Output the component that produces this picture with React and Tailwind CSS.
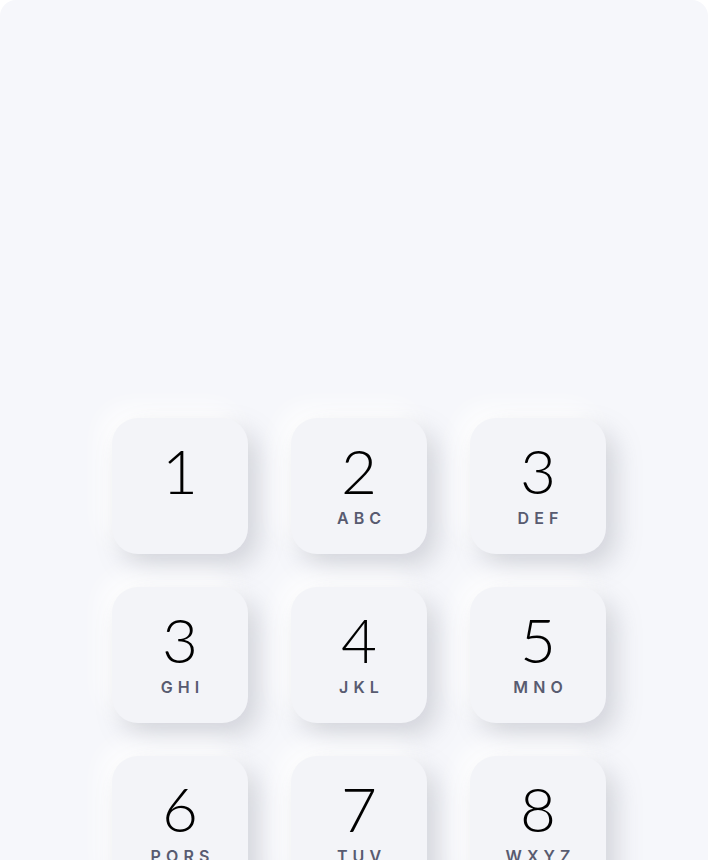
const keys = [
  { digit: '1', letters: '' },
  { digit: '2', letters: 'ABC' },
  { digit: '3', letters: 'DEF' },
  { digit: '3', letters: 'GHI' },
  { digit: '4', letters: 'JKL' },
  { digit: '5', letters: 'MNO' },
  { digit: '6', letters: 'PORS' },
  { digit: '7', letters: 'TUV' },
  { digit: '8', letters: 'WXYZ' },
];

const Key = ({ digit, letters }) => (
  <button
    type="button"
    className="flex h-[136px] w-[136px] flex-col items-center rounded-[26px] bg-[#f3f4f8] pt-[21px] shadow-[10px_12px_26px_rgba(120,122,135,0.28),-10px_-10px_24px_rgba(255,255,255,1)]"
  >
    <span className="font-['Lato',sans-serif] text-[62px] font-light leading-none text-black">{digit}</span>
    {letters && (
      <span className="mt-[9px] pl-[0.32em] font-['Inter',sans-serif] text-[16px] font-semibold leading-none tracking-[0.32em] text-[#585b70]">
        {letters}
      </span>
    )}
  </button>
);

export default function App() {
  return (
    <div className="h-[860px] overflow-hidden bg-white">
      <div className="min-h-[960px] rounded-2xl bg-[#f6f7fb] pb-16 pl-[112px] pt-[418px]">
        <div className="grid w-fit grid-cols-[repeat(3,136px)] gap-x-[43px] gap-y-[33px]">
          {keys.map((k, i) => (
            <Key key={i} {...k} />
          ))}
        </div>
      </div>
    </div>
  );
}
